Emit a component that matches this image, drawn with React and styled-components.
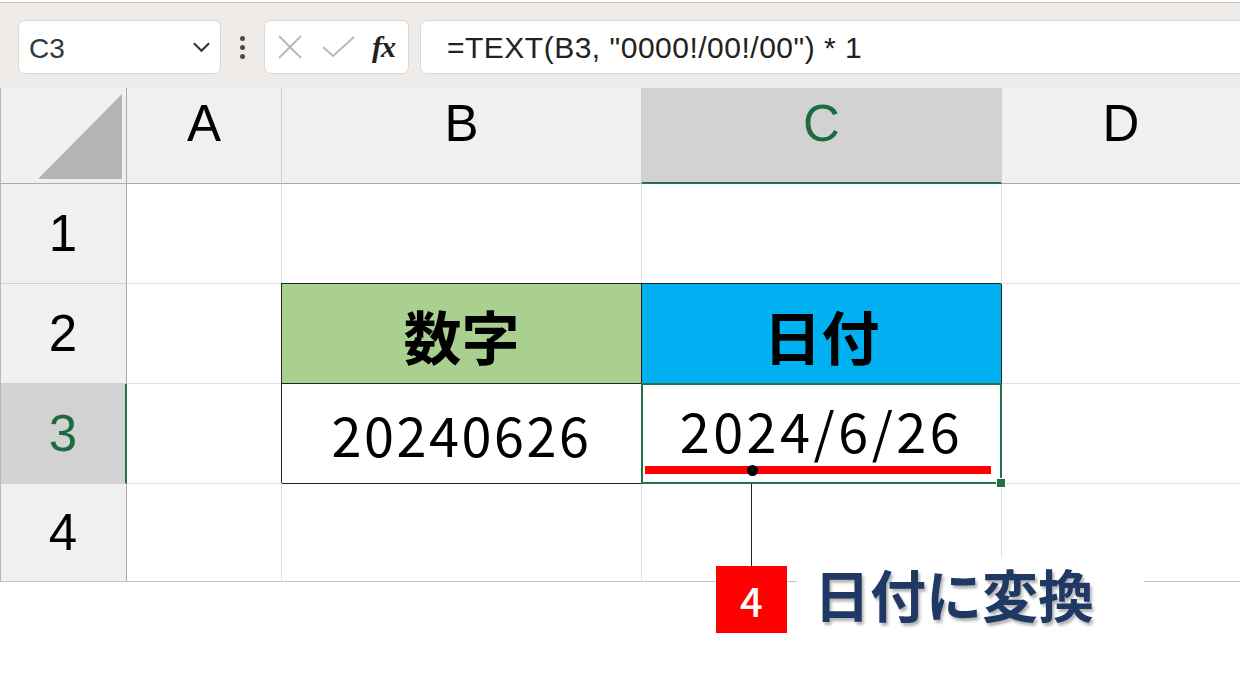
import React from 'react'
import styled, { createGlobalStyle } from 'styled-components'

const GlobalStyle = createGlobalStyle`
    html, body {
        margin: 0;
        padding: 0;
        background: #ffffff;
    }
    * {
        box-sizing: border-box;
    }
`

const columns = ['A', 'B', 'C', 'D']
const rows = [1, 2, 3, 4]

function App() {
    return (
        <Page>
            <GlobalStyle />
            <FormulaBar>
                <NameBox>
                    <span>C3</span>
                    <Chevron viewBox="0 0 20 12">
                        <path d="M2 2 L10 10 L18 2" />
                    </Chevron>
                </NameBox>
                <Dots>
                    <i /><i /><i />
                </Dots>
                <FxBox>
                    <svg width="26" height="26" viewBox="0 0 26 26">
                        <path d="M2 2 L24 24 M24 2 L2 24" stroke="#b8b8b8" strokeWidth="2" fill="none" />
                    </svg>
                    <svg width="33" height="22" viewBox="0 0 33 22">
                        <path d="M1 11 L11 20 L32 1" stroke="#b8b8b8" strokeWidth="2" fill="none" />
                    </svg>
                    <FxLabel>fx</FxLabel>
                </FxBox>
                <FormulaInput>=TEXT(B3, "0000!/00!/00") * 1</FormulaInput>
            </FormulaBar>

            <Sheet>
                <Corner>
                    <svg width="84" height="85" viewBox="0 0 84 85">
                        <polygon points="0,85 84,0 84,85" fill="#b4b4b4" />
                    </svg>
                </Corner>
                {columns.map((c) => (
                    <ColHeader key={c} $active={c === 'C'}>{c}</ColHeader>
                ))}

                {rows.map((r) => (
                    <React.Fragment key={r}>
                        <RowHeader $active={r === 3} $last={r === 4}>{r}</RowHeader>
                        <Cell $last={r === 4} />
                        {r === 2 ? (
                            <>
                                <Cell $fill="#a9d08e" $boxed><HeadText>数字</HeadText></Cell>
                                <Cell $fill="#00b0f0" $boxed><HeadText>日付</HeadText></Cell>
                            </>
                        ) : r === 3 ? (
                            <>
                                <Cell $boxed><ValueText>20240626</ValueText></Cell>
                                <SelectedCell>
                                    <ValueText $spacing="3.5px">2024/6/26</ValueText>
                                    <Underline>
                                        <Dot />
                                    </Underline>
                                </SelectedCell>
                            </>
                        ) : (
                            <>
                                <Cell $last={r === 4} />
                                <Cell $last={r === 4} />
                            </>
                        )}
                        <Cell $last={r === 4} />
                    </React.Fragment>
                ))}
            </Sheet>

            <Connector />
            <Callout>
                <StepBadge>4</StepBadge>
                <CalloutPanel>日付に変換</CalloutPanel>
            </Callout>
        </Page>
    )
}

export default App

const Page = styled.div`
    position: relative;
    width: 1240px;
    height: 673px;
    overflow: hidden;
    background: #ffffff;
    font-family: "Noto Sans CJK JP", "Noto Sans", sans-serif;
`

const FormulaBar = styled.div`
    margin-top: 2px;
    height: 86px;
    border-top: 1px solid #c6c2c0;
    background: #efebe9;
    display: flex;
    align-items: flex-start;
    padding: 17px 0 0 18px;

    & > * {
        flex-shrink: 0;
    }
`

const NameBox = styled.div`
    width: 203px;
    height: 54px;
    background: #ffffff;
    border: 1px solid #dcd8d6;
    border-radius: 7px;
    display: flex;
    align-items: center;
    justify-content: space-between;
    padding: 0 9px 0 10px;
    font-family: "Liberation Sans", Arial, sans-serif;
    font-size: 28px;
    color: #33383f;

    span {
        padding-top: 4px;
    }
`

const Chevron = styled.svg`
    width: 19px;
    height: 12px;

    path {
        fill: none;
        stroke: #333333;
        stroke-width: 2.2;
    }
`

const Dots = styled.div`
    width: 43px;
    height: 54px;
    display: flex;
    flex-direction: column;
    align-items: center;
    justify-content: center;
    gap: 4px;

    i {
        width: 5px;
        height: 5px;
        border-radius: 50%;
        background: #4a4a4a;
    }
`

const FxBox = styled.div`
    width: 145px;
    height: 54px;
    background: #ffffff;
    border: 1px solid #dcd8d6;
    border-radius: 7px;
    display: flex;
    align-items: center;
    gap: 19px;
    padding-left: 12px;
`

const FxLabel = styled.span`
    font-family: "Liberation Serif", "Times New Roman", serif;
    font-style: italic;
    font-weight: bold;
    font-size: 30px;
    color: #222222;
    margin-left: -2px;
    letter-spacing: -1px;
`

const FormulaInput = styled.div`
    margin-left: 11px;
    width: 840px;
    height: 54px;
    background: #ffffff;
    border: 1px solid #dcd8d6;
    border-radius: 7px;
    display: flex;
    align-items: center;
    padding: 2px 0 0 26px;
    font-family: "Liberation Sans", Arial, sans-serif;
    font-size: 30px;
    letter-spacing: 0.5px;
    color: #222222;
`

const Sheet = styled.div`
    display: grid;
    grid-template-columns: 126px 155px 360px 360px 239px;
    grid-template-rows: 96px 100px 100px 100px 98px;
    border-left: 1px solid #b8b8b8;
`

const Corner = styled.div`
    background: #f0f0f0;
    border-right: 1px solid #ababab;
    border-bottom: 1px solid #ababab;
    display: flex;
    align-items: flex-end;
    justify-content: flex-end;
    padding: 0 4px 4px 0;
`

const ColHeader = styled.div`
    background: ${(p) => (p.$active ? '#d2d2d2' : '#f0f0f0')};
    border-right: 1px solid #d0d0d0;
    border-bottom: ${(p) => (p.$active ? '2px solid #217346' : '1px solid #ababab')};
    color: ${(p) => (p.$active ? '#1d6b3f' : '#000000')};
    font-family: "Liberation Sans", Arial, sans-serif;
    font-size: 51px;
    display: flex;
    justify-content: center;
    padding-top: 10px;
    line-height: 1;
`

const RowHeader = styled.div`
    background: ${(p) => (p.$active ? '#d2d2d2' : '#f0f0f0')};
    border-right: ${(p) => (p.$active ? '2px solid #217346' : '1px solid #ababab')};
    border-bottom: 1px solid ${(p) => (p.$last ? '#c4c4c4' : '#d0d0d0')};
    color: ${(p) => (p.$active ? '#1d6b3f' : '#000000')};
    font-family: "Liberation Sans", Arial, sans-serif;
    font-size: 51px;
    display: flex;
    align-items: center;
    justify-content: center;
    padding-right: ${(p) => (p.$active ? '0' : '1px')};
`

const Cell = styled.div`
    position: relative;
    background: ${(p) => p.$fill || '#ffffff'};
    border-right: 1px solid ${(p) => (p.$boxed ? '#222222' : '#e1e1e1')};
    border-bottom: 1px solid ${(p) => (p.$boxed ? '#222222' : p.$last ? '#c4c4c4' : '#e1e1e1')};
    box-shadow: ${(p) => (p.$boxed ? '-1px -1px 0 #222222' : 'none')};
    z-index: ${(p) => (p.$boxed ? 1 : 0)};
    display: flex;
    flex-direction: column;
    align-items: center;
    justify-content: center;
`

const SelectedCell = styled(Cell)`
    z-index: 2;
    justify-content: flex-start;
    padding-top: 19px;

    &::after {
        content: '';
        position: absolute;
        left: -1px;
        top: -1px;
        right: -1px;
        bottom: -1px;
        border: 2px solid #217346;
        pointer-events: none;
    }

    &::before {
        content: '';
        position: absolute;
        right: -5px;
        bottom: -5px;
        width: 8px;
        height: 8px;
        background: #217346;
        border: 1px solid #ffffff;
        z-index: 3;
    }
`

const HeadText = styled.span`
    font-size: 58px;
    font-weight: bold;
    color: #000000;
    line-height: 1;
    margin-top: 2px;
`

const ValueText = styled.span`
    font-size: 54px;
    color: #000000;
    line-height: 1;
    letter-spacing: ${(p) => p.$spacing || '2.5px'};
`

const Underline = styled.div`
    position: relative;
    align-self: flex-start;
    margin: 9px 0 0 3px;
    width: 346px;
    height: 8px;
    background: #ff0000;
`

const Dot = styled.div`
    position: absolute;
    left: 102px;
    top: -1px;
    width: 11px;
    height: 11px;
    border-radius: 50%;
    background: #000000;
`

const Connector = styled.div`
    position: absolute;
    left: 751px;
    top: 474px;
    width: 1px;
    height: 92px;
    background: #222222;
`

const Callout = styled.div`
    position: absolute;
    left: 716px;
    top: 557px;
    display: flex;
    align-items: flex-start;
    gap: 10px;
`

const StepBadge = styled.div`
    margin-top: 9px;
    width: 71px;
    height: 67px;
    background: #ff0000;
    color: #ffffff;
    font-size: 40px;
    font-weight: 500;
    display: flex;
    align-items: center;
    justify-content: center;
    line-height: 1;
`

const CalloutPanel = styled.div`
    width: 347px;
    height: 95px;
    background: #ffffff;
    padding: 5px 0 0 17px;
    font-size: 56px;
    font-weight: bold;
    color: #1f3864;
    line-height: 1.1;
    text-shadow: 2px 3px 3px rgba(0, 0, 0, 0.3);
`
